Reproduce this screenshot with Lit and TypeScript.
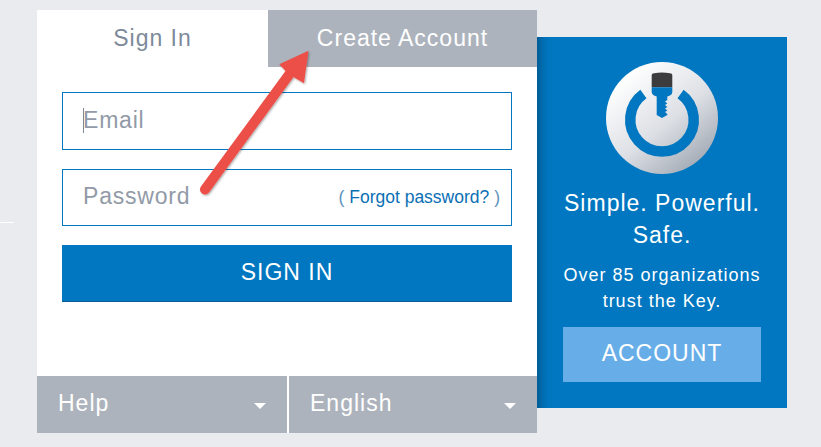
import { LitElement, html, css, svg } from 'lit';
import { customElement } from 'lit/decorators.js';

const logo = svg`
  <defs>
    <linearGradient id="disc" x1="0.2" y1="0.1" x2="0.85" y2="0.9">
      <stop offset="0" stop-color="#ffffff" />
      <stop offset="0.55" stop-color="#dcdfe4" />
      <stop offset="1" stop-color="#a4abb6" />
    </linearGradient>
  </defs>
  <circle cx="56" cy="56" r="56" fill="url(#disc)" />
  <path d="M37.4 32 A31.75 31.75 0 1 0 74.6 32" fill="none" stroke="#0077c0" stroke-width="10.5" />
  <path d="M45.7 13 Q45.7 11.5 48 11.2 Q56 10 64 11.2 Q66.3 11.5 66.3 13 L66.3 25.3 L45.7 25.3 Z" fill="#3c3c3e" />
  <path d="M45.7 25.3 L66.3 25.3 L66.3 30 Q66.3 33 61.3 34.5 L61.3 38 L59 39.5 L61.3 41.5 L59 43 L61.3 45 L59 46.5 L61.3 48.5 L59 50 L61.3 52 L61.3 53 L56 56 L50.7 53 L50.7 34.5 Q45.7 33 45.7 30 Z" fill="#0077c0" />
`;

@customElement('app-root')
export class AppRoot extends LitElement {
  static override styles = css`
    :host {
      display: block;
      position: relative;
      width: 821px;
      height: 447px;
      overflow: hidden;
      background: #e9ebef;
      font-family: 'Liberation Sans', Arial, sans-serif;
      font-size: 23px;
      letter-spacing: 1px;
    }

    .page {
      display: flex;
      align-items: flex-start;
      padding: 10px 0 0 37px;
    }

    .card {
      width: 500px;
      height: 423px;
      background: #fff;
      display: flex;
      flex-direction: column;
    }

    .tabs {
      display: flex;
      height: 57px;
    }

    .tab {
      display: flex;
      align-items: center;
      justify-content: center;
    }

    .tab.active {
      width: 231px;
      color: #7d8a9a;
    }

    .tab.other {
      flex: 1;
      background: #adb3bc;
      color: #fff;
    }

    .form {
      flex: 1;
      display: flex;
      flex-direction: column;
      padding: 25px 25px 0;
    }

    .field {
      box-sizing: border-box;
      height: 58px;
      margin-bottom: 19px;
      border: 1px solid #0077c0;
      display: flex;
      align-items: center;
      justify-content: space-between;
      padding: 0 11px 2px 20px;
      letter-spacing: 0.8px;
      color: #929aa8;
    }

    .field.short {
      height: 57px;
    }

    .placeholder {
      display: flex;
      align-items: center;
    }

    .caret {
      width: 1px;
      height: 25px;
      margin-right: -1px;
      background: #7f8794;
    }

    .forgot {
      margin-top: 2px;
      font-size: 17.5px;
      letter-spacing: 0;
      color: #5f93bd;
    }

    .forgot a {
      color: #0a6fb5;
      text-decoration: none;
    }

    .submit {
      height: 57px;
      padding-bottom: 2px;
      background: #0077c0;
      border-bottom: 1px solid #0a5f96;
      box-sizing: border-box;
      color: #fff;
      display: flex;
      align-items: center;
      justify-content: center;
    }

    .footer {
      display: flex;
      gap: 2px;
      height: 57px;
    }

    .menu {
      box-sizing: border-box;
      width: 248px;
      background: #adb3bc;
      color: #fff;
      display: flex;
      align-items: center;
      justify-content: space-between;
      padding: 0 21px 2px;
    }

    .menu:first-child {
      width: 250px;
    }

    .menu::after {
      content: '';
      margin-top: 5px;
      border-left: 6px solid transparent;
      border-right: 6px solid transparent;
      border-top: 6px solid #fff;
    }

    .panel {
      box-sizing: border-box;
      width: 250px;
      height: 371px;
      margin-top: 27px;
      background: #0077c0;
      box-shadow: inset 14px 0 12px -12px rgba(0, 0, 0, 0.35);
      color: #fff;
      display: flex;
      flex-direction: column;
      align-items: center;
      padding-top: 25px;
      text-align: center;
    }

    .logo {
      display: block;
      width: 112px;
      height: 112px;
      margin-bottom: 13px;
    }

    .headline {
      line-height: 32px;
      margin-bottom: 11px;
    }

    .sub {
      font-size: 18px;
      line-height: 26px;
      margin-bottom: 13px;
    }

    .cta {
      box-sizing: border-box;
      width: 198px;
      height: 55px;
      padding-bottom: 2px;
      background: #67aee8;
      display: flex;
      align-items: center;
      justify-content: center;
    }

    .rule {
      position: absolute;
      left: 0;
      top: 222px;
      width: 14px;
      height: 1px;
      background: #fff;
    }

    .arrow {
      position: absolute;
      left: 0;
      top: 0;
      width: 821px;
      height: 447px;
      pointer-events: none;
    }
  `;

  override render() {
    return html`
      <div class="page">
        <div class="card">
          <div class="tabs">
            <div class="tab active">Sign In</div>
            <div class="tab other">Create Account</div>
          </div>
          <div class="form">
            <div class="field">
              <span class="placeholder"><span class="caret"></span>Email</span>
            </div>
            <div class="field short">
              <span>Password</span>
              <span class="forgot">( <a>Forgot password?</a> )</span>
            </div>
            <div class="submit">SIGN IN</div>
          </div>
          <div class="footer">
            <div class="menu">Help</div>
            <div class="menu">English</div>
          </div>
        </div>
        <div class="panel">
          <svg class="logo" viewBox="0 0 112 112">${logo}</svg>
          <div class="headline">Simple. Powerful.<br />Safe.</div>
          <div class="sub">Over 85 organizations<br />trust the Key.</div>
          <div class="cta">ACCOUNT</div>
        </div>
      </div>
      <div class="rule"></div>
      <svg class="arrow" viewBox="0 0 821 447">
        <defs>
          <filter id="shadow" x="-20%" y="-20%" width="140%" height="140%">
            <feDropShadow dx="1" dy="1" stdDeviation="1.2" flood-color="#000" flood-opacity="0.35" />
          </filter>
        </defs>
        <g filter="url(#shadow)" fill="#ec4f47">
          <path d="M205 189.5 L291 72" stroke="#ec4f47" stroke-width="10" stroke-linecap="round" fill="none" />
          <path d="M308.5 50.7 L279.3 64.3 L286 71.5 L295 78 L304 83.3 Z" />
        </g>
      </svg>
    `;
  }
}

declare global {
  interface HTMLElementTagNameMap {
    'app-root': AppRoot;
  }
}
